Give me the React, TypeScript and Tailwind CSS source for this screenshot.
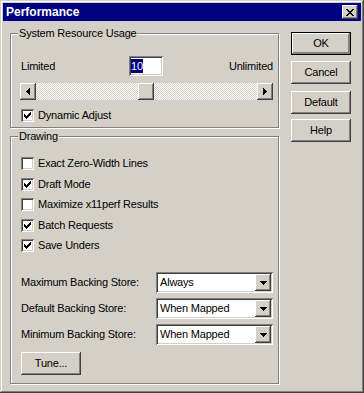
import React from 'react';

const raised =
  'shadow-[inset_-1px_-1px_0_#404040,inset_1px_1px_0_#fff,inset_-2px_-2px_0_#808080,inset_2px_2px_0_#d4d0c8]';
const sunken =
  'shadow-[inset_1px_1px_0_#808080,inset_-1px_-1px_0_#fff,inset_2px_2px_0_#404040,inset_-2px_-2px_0_#d4d0c8]';

function CheckMark() {
  return (
    <svg width="7" height="7" viewBox="0 0 7 7" shapeRendering="crispEdges" className="absolute left-[3px] top-[3px]">
      <path
        fill="#000"
        d="M6 0h1v1h-1z M5 1h2v1h-2z M0 2h1v1h-1z M4 2h3v1h-3z M0 3h2v1h-2z M3 3h3v1h-3z M0 4h5v1h-5z M1 5h3v1h-3z M2 6h1v1h-1z"
      />
    </svg>
  );
}

function CheckBox({ checked, label }: { checked?: boolean; label: string }) {
  return (
    <div className="flex items-center h-[13px]">
      <span className={`relative block w-[13px] h-[13px] bg-white ${sunken}`}>{checked && <CheckMark />}</span>
      <span className="ml-[4px] whitespace-nowrap">{label}</span>
    </div>
  );
}

function ArrowDown() {
  return (
    <svg width="7" height="4" viewBox="0 0 7 4" shapeRendering="crispEdges">
      <path fill="#000" d="M0 0h7v1h-7z M1 1h5v1h-5z M2 2h3v1h-3z M3 3h1v1h-1z" />
    </svg>
  );
}

function ArrowLeft() {
  return (
    <svg width="4" height="7" viewBox="0 0 4 7" shapeRendering="crispEdges">
      <path fill="#000" d="M3 0h1v7h-1z M2 1h1v5h-1z M1 2h1v3h-1z M0 3h1v1h-1z" />
    </svg>
  );
}

function ArrowRight() {
  return (
    <svg width="4" height="7" viewBox="0 0 4 7" shapeRendering="crispEdges">
      <path fill="#000" d="M0 0h1v7h-1z M1 1h1v5h-1z M2 2h1v3h-1z M3 3h1v1h-1z" />
    </svg>
  );
}

function GroupBox({ label, className, children }: { label: string; className: string; children: React.ReactNode }) {
  return (
    <div className={`relative border border-[#808080] shadow-[inset_1px_1px_0_#fff,1px_1px_0_#fff] ${className}`}>
      <span className="absolute left-[7px] top-[-8px] px-[1px] bg-[#d4d0c8] leading-[14px] whitespace-nowrap">{label}</span>
      {children}
    </div>
  );
}

function Combo({ value }: { value: string }) {
  return (
    <div className={`flex w-[117px] h-[21px] p-[2px] bg-white ${sunken}`}>
      <span className="flex-1 pl-[2px] leading-[17px] whitespace-nowrap">{value}</span>
      <span className={`flex items-center justify-center w-[16px] h-[17px] bg-[#d4d0c8] ${raised}`}>
        <ArrowDown />
      </span>
    </div>
  );
}

function PushButton({ label, isDefault }: { label: string; isDefault?: boolean }) {
  if (isDefault) {
    return (
      <div className="w-[60px] h-[23px] border border-black">
        <div className="h-full flex items-center justify-center shadow-[inset_-1px_-1px_0_#808080,inset_1px_1px_0_#fff,inset_-2px_-2px_0_#808080]">
          {label}
        </div>
      </div>
    );
  }
  return <div className={`w-[60px] h-[23px] flex items-center justify-center ${raised}`}>{label}</div>;
}

const backing = [
  { label: 'Maximum Backing Store:', value: 'Always' },
  { label: 'Default Backing Store:', value: 'When Mapped' },
  { label: 'Minimum Backing Store:', value: 'When Mapped' },
];

export default function App() {
  return (
    <div
      className={`w-[364px] h-[393px] p-[3px] bg-[#d4d0c8] text-black text-[11px] tracking-[-0.2px] font-['Liberation_Sans',Arial,sans-serif] shadow-[inset_-1px_-1px_0_#404040,inset_1px_1px_0_#d4d0c8,inset_-2px_-2px_0_#808080,inset_2px_2px_0_#fff]`}
    >
      {/* title bar */}
      <div className="h-[18px] bg-[#000080] flex items-center pl-[3px] pr-[3px]">
        <span className="text-white font-bold text-[12px] tracking-normal">Performance</span>
        <div className={`ml-auto w-[16px] h-[14px] bg-[#d4d0c8] flex items-center justify-center ${raised}`}>
          <svg width="8" height="7" viewBox="0 0 8 7" shapeRendering="crispEdges">
            <path
              fill="#000"
              d="M0 0h2v1H0z M6 0h2v1H6z M1 1h2v1H1z M5 1h2v1H5z M2 2h4v1H2z M3 3h2v1H3z M2 4h4v1H2z M1 5h2v1H1z M5 5h2v1H5z M0 6h2v1H0z M6 6h2v1H6z"
            />
          </svg>
        </div>
      </div>

      <div className="flex pl-[7px]">
        <div className="w-[269px] mt-[12px]">
          <GroupBox label="System Resource Usage" className="h-[95px]">
            <div className="pt-[22px] pl-[9px] pr-[5px]">
              <div className="flex items-center h-[20px]">
                <span className="w-[109px] pl-[1px]">Limited</span>
                <div className={`w-[34px] h-[20px] bg-white flex items-center pl-[2px] ${sunken}`}>
                  <span className="bg-[#000080] text-white leading-[14px]">10</span>
                </div>
                <span className="flex-1 text-right">Unlimited</span>
              </div>
              <div className="mt-[7px] h-[17px] flex bg-[image:repeating-conic-gradient(#d4d0c8_0_25%,#fff_0_50%)] bg-size-[2px_2px]">
                <span className={`w-[16px] h-[17px] bg-[#d4d0c8] flex items-center justify-center ${raised}`}>
                  <ArrowLeft />
                </span>
                <span className="w-[102px]" />
                <span className={`w-[16px] h-[17px] bg-[#d4d0c8] ${raised}`} />
                <span className="flex-1" />
                <span className={`w-[16px] h-[17px] bg-[#d4d0c8] flex items-center justify-center ${raised}`}>
                  <ArrowRight />
                </span>
              </div>
              <div className="mt-[9px] ml-[1px]">
                <CheckBox checked label="Dynamic Adjust" />
              </div>
            </div>
          </GroupBox>

          <GroupBox label="Drawing" className="h-[248px] mt-[8px]">
            <div className="pt-[20px] pl-[10px] pr-[5px]">
              <div className="flex flex-col gap-[7.5px]">
                <CheckBox label="Exact Zero-Width Lines" />
                <CheckBox checked label="Draft Mode" />
                <CheckBox label="Maximize x11perf Results" />
                <CheckBox checked label="Batch Requests" />
                <CheckBox checked label="Save Unders" />
              </div>
              <div className="mt-[20px] flex flex-col gap-[5px]">
                {backing.map((b) => (
                  <div key={b.label} className="flex items-center">
                    <span className="w-[135px] whitespace-nowrap">{b.label}</span>
                    <Combo value={b.value} />
                  </div>
                ))}
              </div>
              <div className="mt-[7px]">
                <PushButton label="Tune..." />
              </div>
            </div>
          </GroupBox>
        </div>

        <div className="ml-[12px] mt-[11px] flex flex-col">
          <PushButton label="OK" isDefault />
          <div className="mt-[6px]">
            <PushButton label="Cancel" />
          </div>
          <div className="mt-[7px]">
            <PushButton label="Default" />
          </div>
          <div className="mt-[5px]">
            <PushButton label="Help" />
          </div>
        </div>
      </div>
    </div>
  );
}
